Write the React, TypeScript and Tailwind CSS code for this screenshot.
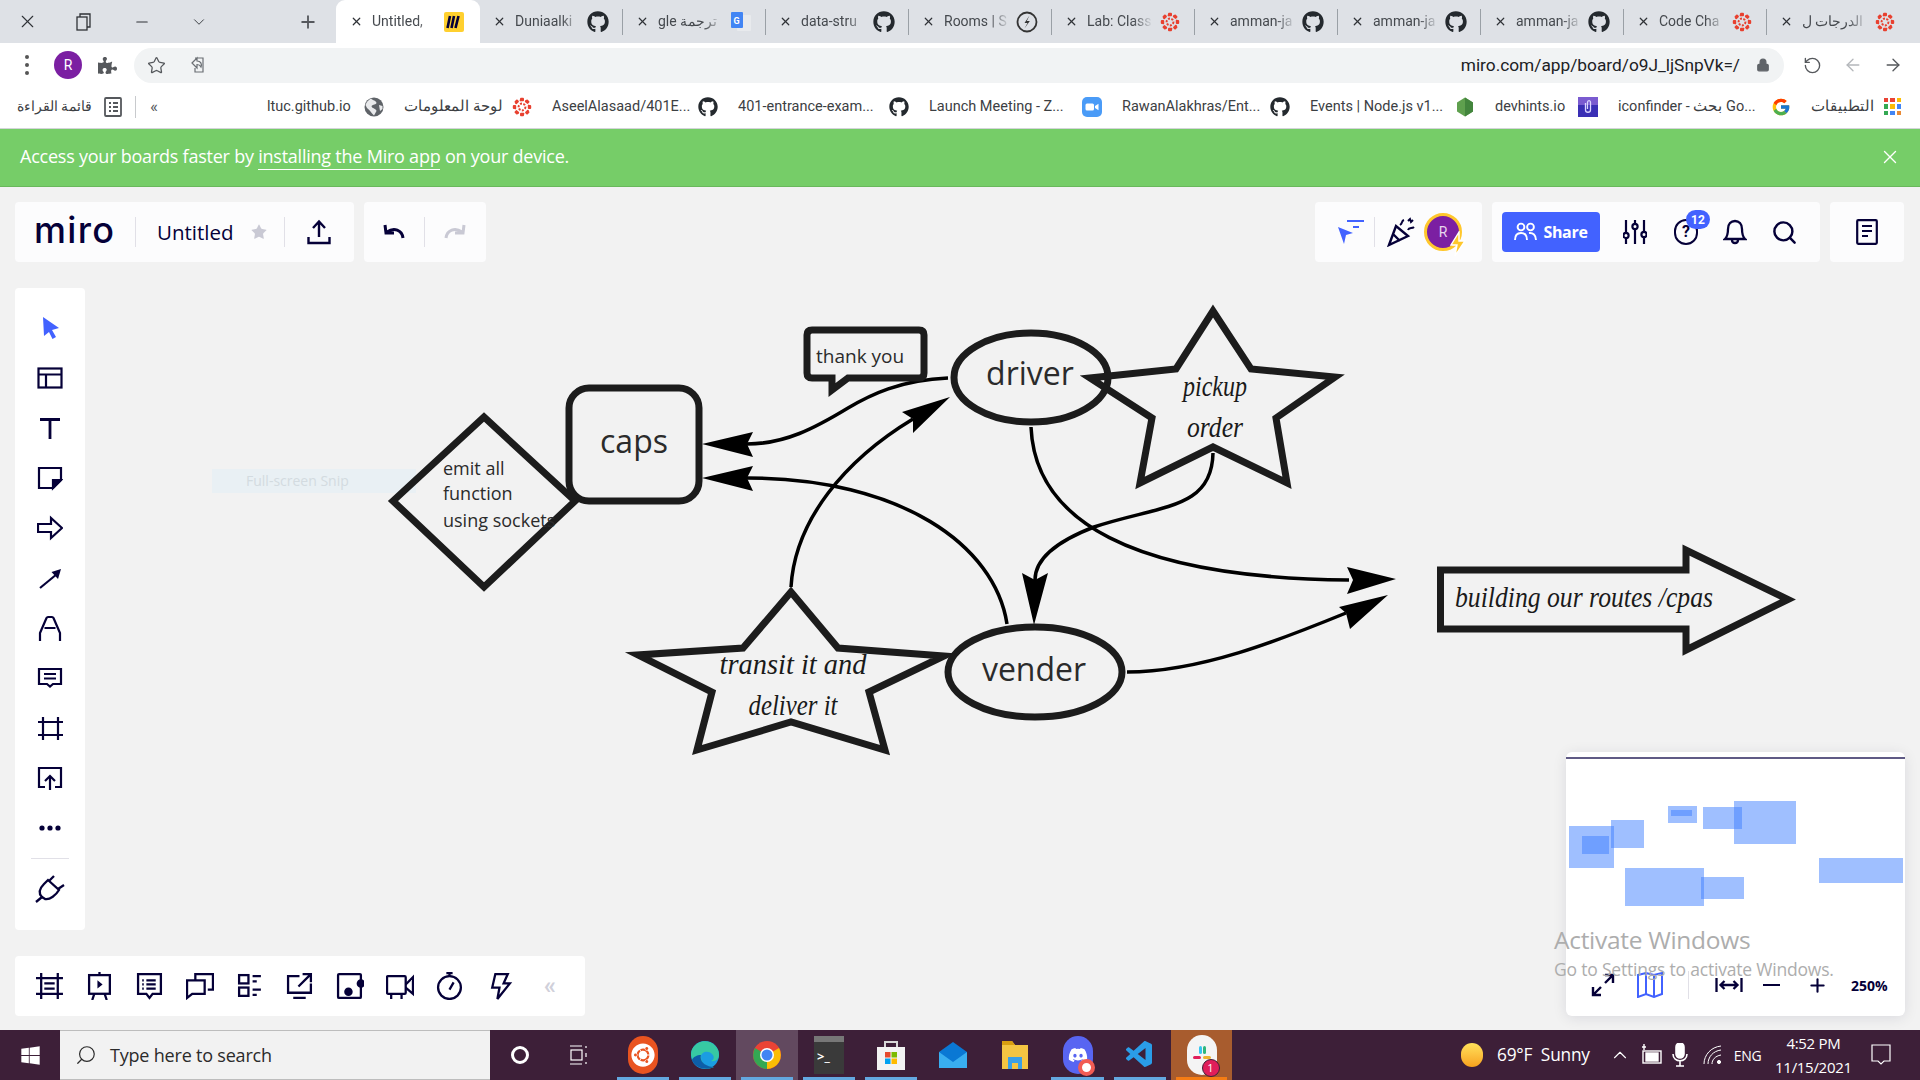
import { ReactNode } from 'react';
import { ArrowLeft, ArrowRight, ChevronDown, ChevronUp, Lock, Minus, Plus, RotateCw, Search, Star, X } from 'lucide-react';
import { FaGithub, FaUbuntu, FaDiscord, FaWindows, FaPuzzlePiece } from 'react-icons/fa';
import { FcGoogle } from 'react-icons/fc';
import { VscVscode } from 'react-icons/vsc';

const INK = '#050038';

function Github({ size = 22 }: { size?: number }) {
  return <FaGithub size={size} className="text-[#24292e] shrink-0" />;
}

function CanvasIcon() {
  const dots = [0, 45, 90, 135, 180, 225, 270, 315];
  return (
    <svg width="20" height="20" viewBox="0 0 20 20" className="shrink-0">
      <circle cx="10" cy="10" r="3.4" fill="none" stroke="#e8402f" strokeWidth="2" strokeDasharray="2 1.4" />
      {dots.map(d => (
        <g key={d} transform={`rotate(${d} 10 10)`}>
          <rect x="8" y="0.8" width="4" height="3.4" rx="1" fill="#e8402f" />
          <circle cx="13.8" cy="4.2" r="1" fill="#e8402f" />
        </g>
      ))}
    </svg>
  );
}

function MiroFav() {
  return (
    <svg width="20" height="20" viewBox="0 0 20 20" className="shrink-0">
      <rect width="20" height="20" rx="2" fill="#ffd02f" />
      <path d="M6 4 L3.5 16 M10 4 L7.5 16 M14.5 4 L11.5 16" stroke="#050038" strokeWidth="2.6" fill="none" />
    </svg>
  );
}

function TranslateFav() {
  return (
    <svg width="20" height="20" viewBox="0 0 20 20" className="shrink-0">
      <rect x="6" y="3" width="14" height="16" rx="1" fill="#e8eaed" />
      <rect x="0" y="0" width="12" height="16" rx="1" fill="#4285f4" />
      <text x="2.5" y="11.5" fontSize="9" fontWeight="700" fill="#fff" fontFamily="Roboto, sans-serif">G</text>
    </svg>
  );
}

function RoomsFav() {
  return (
    <svg width="22" height="22" viewBox="0 0 22 22" className="shrink-0">
      <circle cx="11" cy="11" r="9.5" fill="none" stroke="#333" strokeWidth="1.8" />
      <path d="M13.5 4.5 L8.5 12 H11.5 L8.5 17.5 L13.8 10 H10.8 Z" fill="#333" />
    </svg>
  );
}

function Favicon({ kind }: { kind: string }) {
  if (kind === 'miro') return <MiroFav />;
  if (kind === 'gh') return <Github />;
  if (kind === 'tr') return <TranslateFav />;
  if (kind === 'rooms') return <RoomsFav />;
  return <CanvasIcon />;
}

const tabs = [
  { t: 'Untitled,', f: 'miro', active: true },
  { t: 'Duniaalki', f: 'gh' },
  { t: 'gle ترجمة', f: 'tr' },
  { t: 'data-stru', f: 'gh' },
  { t: 'Rooms | S', f: 'rooms' },
  { t: 'Lab: Class', f: 'canvas' },
  { t: 'amman-ja', f: 'gh' },
  { t: 'amman-ja', f: 'gh' },
  { t: 'amman-ja', f: 'gh' },
  { t: 'Code Cha', f: 'canvas' },
  { t: 'الدرجات ل', f: 'canvas' }
];

function tabClass(active: boolean | undefined, last: boolean) {
  if (active) return 'flex h-[43px] w-[144px] items-center rounded-t-[9px] bg-white pl-[14px] pr-[15px] text-[14px]';
  if (last) return 'flex h-[43px] w-[143px] items-center pl-[13px] pr-[14px] text-[14px]';
  return 'flex h-[43px] w-[143px] items-center pl-[13px] pr-[20px] text-[14px]';
}

function TabStrip() {
  return (
    <div className="flex h-[43px] bg-[#dee1e6] text-[#45494e]">
      <div className="flex w-[336px] items-center text-[#2f3237]">
        <X size={21} strokeWidth={1.3} className="ml-[17px]" />
        <svg width="16" height="18" viewBox="0 0 16 18" className="ml-[38px]" fill="none" stroke="#2f3237" strokeWidth="1.3">
          <rect x="1" y="4" width="10" height="13" />
          <path d="M4 4 V1 H14 V14 H11" />
        </svg>
        <Minus size={18} strokeWidth={1.4} className="ml-[41px]" />
        <ChevronDown size={18} strokeWidth={1.2} className="ml-[39px]" />
        <Plus size={20} strokeWidth={2.2} className="ml-[90px] text-[#55585d]" />
      </div>
      {tabs.map((tab, i) => (
        <div key={i} className={tabClass(tab.active, i === tabs.length - 1)}>
          <X size={13} strokeWidth={2.2} className="mr-[9px] shrink-0 text-[#2f3237]" />
          <span className="min-w-0 flex-1 overflow-hidden whitespace-nowrap [mask-image:linear-gradient(to_right,black_70%,transparent)]">{tab.t}</span>
          <span className="ml-[6px] flex w-[22px] justify-center"><Favicon kind={tab.f} /></span>
          {!tab.active && i < tabs.length - 1 && i > 0 && <span className="ml-[13px] -mr-[20px] h-[26px] w-px bg-[#9aa0a6]" />}
        </div>
      ))}
    </div>
  );
}

function AddressBar() {
  return (
    <div className="flex h-[44px] items-center bg-white text-[#5f6368]">
      <div className="ml-[25px] flex w-[4px] flex-col gap-[4px]">
        <span className="h-[4px] w-[4px] rounded-full bg-[#555]" />
        <span className="h-[4px] w-[4px] rounded-full bg-[#555]" />
        <span className="h-[4px] w-[4px] rounded-full bg-[#555]" />
      </div>
      <span className="ml-[25px] flex h-[28px] w-[28px] items-center justify-center rounded-full bg-[#7b1fa2] text-[14px] text-white">R</span>
      <FaPuzzlePiece size={19} className="ml-[16px] text-[#55585c]" />
      <div className="ml-[17px] flex h-[35px] w-[1650px] items-center rounded-full bg-[#f1f3f4] pl-[13px] pr-[14px]">
        <Star size={19} strokeWidth={1.6} className="text-[#55585c]" />
        <svg width="20" height="20" viewBox="0 0 20 20" className="ml-[22px]" fill="none" stroke="#6a6e73" strokeWidth="1.2">
          <path d="M7 3 H15 V17 H7 V13 M4 8 L9 3 V6 C13 6 14 9 13 12 C12 10 11 9.5 9 9.5 V13 Z" />
        </svg>
        <span className="ml-auto pt-[2px] text-[17.3px] text-[#202124]">miro.com/app/board/o9J_ljSnpVk=/</span>
        <Lock size={14} fill="#5f6368" strokeWidth={2} className="ml-[16px]" />
      </div>
      <RotateCw size={19} strokeWidth={1.7} className="ml-[19px] -scale-x-100 text-[#55585c]" />
      <ArrowLeft size={20} strokeWidth={1.6} className="ml-[21px] text-[#b4b7bb]" />
      <ArrowRight size={20} strokeWidth={1.6} className="ml-[20px] text-[#55585c]" />
    </div>
  );
}

function ZoomFav() {
  return (
    <svg width="20" height="20" viewBox="0 0 20 20" className="shrink-0">
      <rect width="20" height="20" rx="5" fill="#4a9bf7" />
      <rect x="3.5" y="6.5" width="8.5" height="7" rx="1.5" fill="#fff" />
      <path d="M13 9 L16.5 6.8 V13.2 L13 11 Z" fill="#fff" />
    </svg>
  );
}

function NodeFav() {
  return (
    <svg width="20" height="20" viewBox="0 0 20 20" className="shrink-0">
      <path d="M10 0.5 L18 5.5 V14.5 L10 19.5 L2 14.5 V5.5 Z" fill="#5fa04e" />
      <path d="M10 0.5 L18 5.5 V14.5 L10 19.5 Z" fill="#43853d" />
    </svg>
  );
}

function HintsFav() {
  return (
    <svg width="20" height="20" viewBox="0 0 20 20" className="shrink-0">
      <rect width="20" height="20" fill="#3a2fb5" />
      <rect width="20" height="8" fill="#7a5bd0" />
      <path d="M7.5 6 V13 C7.5 16 12.5 16 12.5 13 V5.5 C12.5 3 9.5 3 9.5 5.5 V12" stroke="#dcd6ff" strokeWidth="1.3" fill="none" />
    </svg>
  );
}

function GlobeFav() {
  return (
    <svg width="20" height="20" viewBox="0 0 20 20" className="shrink-0">
      <circle cx="10" cy="10" r="9.5" fill="#5f6368" />
      <path d="M7 1.5 C9 4 12 3 12.5 6 C12 8 9 7 7.5 9 C8 12 12 11 12.5 14 L10 18.5 C7 16 6 13 3 11 L1.5 8 C3 4 5 3 7 1.5 Z M15 8 L18.5 9 V12 L16 14 Z" fill="#e9eaec" />
    </svg>
  );
}

function AppsFav() {
  const c = ['#ea4335', '#ea4335', '#fbbc05', '#34a853', '#fbbc05', '#4285f4', '#34a853', '#4285f4', '#ea8a35'];
  return (
    <div className="grid h-[17px] w-[17px] shrink-0 grid-cols-3 gap-[2px]">
      {c.map((col, i) => <span key={i} style={{ background: col }} />)}
    </div>
  );
}

const bookmarks: { t: string; w: string; icon: ReactNode }[] = [
  { t: 'ltuc.github.io', w: 'w-[85px]', icon: <GlobeFav /> },
  { t: 'لوحة المعلومات', w: 'w-[96px]', icon: <CanvasIcon /> },
  { t: 'AseelAlasaad/401E...', w: 'w-[134px]', icon: <Github size={20} /> },
  { t: '401-entrance-exam...', w: 'w-[139px]', icon: <Github size={20} /> },
  { t: 'Launch Meeting - Z...', w: 'w-[141px]', icon: <ZoomFav /> },
  { t: 'RawanAlakhras/Ent...', w: 'w-[136px]', icon: <Github size={20} /> },
  { t: 'Events | Node.js v1...', w: 'w-[133px]', icon: <NodeFav /> },
  { t: 'devhints.io', w: 'w-[71px]', icon: <HintsFav /> },
  { t: 'iconfinder - بحث Go...', w: 'w-[141px]', icon: <FcGoogle size={20} className="shrink-0" /> },
  { t: 'التطبيقات', w: 'w-[61px]', icon: <AppsFav /> }
];

function Bookmarks() {
  return (
    <div className="flex h-[42px] items-center border-b border-[#d3d5d8] bg-white pb-[2px] text-[14.5px] text-[#3c4043]">
      <span dir="rtl" className="ml-[18px] w-[74px] whitespace-nowrap text-[13.5px]">قائمة القراءة</span>
      <svg width="18" height="20" viewBox="0 0 18 20" className="ml-[12px]" fill="none" stroke="#55585c" strokeWidth="1.8">
        <rect x="1" y="1" width="16" height="18" rx="1" />
        <path d="M5 6 H7 M9 6 H14 M5 10 H7 M9 10 H14 M5 14 H7 M9 14 H14" />
      </svg>
      <span className="ml-[13px] h-[22px] w-px bg-[#c8cacd]" />
      <span className="ml-[14px] w-[10px] text-[17px] leading-none text-[#55585c]">«</span>
      <div className="ml-[107px] flex items-center gap-[20px]">
        {bookmarks.map(b => (
          <div key={b.t} className="flex items-center gap-[12px]">
            <span className={`${b.w} whitespace-nowrap`}>{b.t}</span>
            {b.icon}
          </div>
        ))}
      </div>
    </div>
  );
}

function Banner() {
  return (
    <div className="flex h-[58px] items-center justify-between border-b border-[#69b85c] bg-[#76cd68] pb-[2px] pl-[20px] pr-[19px] text-[18px] text-white [font-family:'Open_Sans',sans-serif] tracking-[-0.23px]">
      <span>Access your boards faster by <span className="border-b border-white pb-[1px]">installing the Miro app</span> on your device.</span>
      <X size={22} strokeWidth={1.5} />
    </div>
  );
}

function Sep({ cls = 'h-[30px]' }: { cls?: string }) {
  return <span className={`block ${cls} w-px bg-[#e1e0e7]`} />;
}

function UploadIco() {
  return (
    <svg width="24" height="26" viewBox="0 0 24 26" fill="none" stroke={INK} strokeWidth="2.4">
      <path d="M12 18 V3 M6 9 L12 2.5 L18 9 M1.5 18 V24 H22.5 V18" />
    </svg>
  );
}

function TopBar() {
  return (
    <div className="flex h-[60px] items-stretch justify-between pl-[15px] pr-[16px]">
      <div className="flex gap-[10px]">
        <div className="flex w-[339px] items-center rounded-[4px] bg-[#fcfcfd] text-[#050038]">
          <span className="ml-[19px] w-[82px] pb-[4px] text-[36px] font-medium leading-none tracking-[1.3px] [font-family:Inter,sans-serif]">miro</span>
          <span className="ml-[19px]"><Sep /></span>
          <span className="ml-[21px] w-[78px] whitespace-nowrap text-[20.5px] font-medium [font-family:'Open_Sans',sans-serif]">Untitled</span>
          <Star size={18} fill="#c9c9d4" strokeWidth={0} className="ml-[15px]" />
          <span className="ml-[16px]"><Sep /></span>
          <span className="ml-[22px]"><UploadIco /></span>
        </div>
        <div className="flex w-[122px] items-center rounded-[4px] bg-[#fcfcfd]">
          <svg width="24" height="20" viewBox="0 0 24 20" className="ml-[18px]" fill="none" stroke={INK} strokeWidth="3">
            <path d="M21 16 C20 8 12 5 5 10 M3 3 L4 11 L12 11" />
          </svg>
          <span className="ml-[18px]"><Sep /></span>
          <svg width="24" height="20" viewBox="0 0 24 20" className="ml-[18px] -scale-x-100" fill="none" stroke="#c9c9d4" strokeWidth="3">
            <path d="M21 16 C20 8 12 5 5 10 M3 3 L4 11 L12 11" />
          </svg>
        </div>
      </div>
      <div className="flex gap-[10px]">
        <div className="flex w-[167px] items-center rounded-[4px] bg-[#fcfcfd]">
          <svg width="28" height="26" viewBox="0 0 28 26" className="ml-[22px]">
            <path d="M1 8 L16 14 L9 16 L7 25 Z" fill="#4262ff" />
            <path d="M10 2 H27 M16 8 H22" stroke="#4262ff" strokeWidth="2.2" />
          </svg>
          <span className="ml-[9px]"><Sep /></span>
          <svg width="30" height="30" viewBox="0 0 30 30" className="ml-[12px]" fill="none" stroke={INK} strokeWidth="2.4">
            <path d="M2 28 L9 9 L21 19 Z M6 17 L13 24" />
            <path d="M13 8 C16 6 14 4 17 3 M21 13 C22 10 25 12 27 10 M21 4 L23 2 L24 5 L26 3" strokeWidth="2" />
          </svg>
          <div className="relative ml-[7px] flex h-[38px] w-[38px] items-center justify-center rounded-full border-[3px] border-[#ffc72c] bg-[#7b1fa2] text-[14px] text-[#e8d5ee]">
            R
            <svg width="16" height="26" viewBox="0 0 16 26" className="absolute -bottom-[9px] -right-[7px]">
              <path d="M9 1 L1 14 H7 L5 25 L15 10 H9 Z" fill="#ffc72c" stroke="#fff" strokeWidth="1.4" />
            </svg>
          </div>
        </div>
        <div className="flex w-[328px] items-center rounded-[4px] bg-[#fcfcfd]">
          <div className="ml-[10px] flex h-[40px] w-[98px] items-center justify-center gap-[6px] rounded-[4px] bg-[#4262ff] text-[16px] font-bold text-white [font-family:'Open_Sans',sans-serif] tracking-[-0.3px]">
            <svg width="23" height="20" viewBox="0 0 23 20" fill="none" stroke="#fff" strokeWidth="1.9">
              <circle cx="7" cy="5" r="3.4" /><circle cx="16.5" cy="5" r="3.4" />
              <path d="M1 18 C1 13 3 11 7 11 C11 11 13 13 13 18 M15 11 C19 10.5 22 13 22 18" />
            </svg>
            Share
          </div>
          <svg width="24" height="26" viewBox="0 0 24 26" className="ml-[23px]" fill="none" stroke={INK} strokeWidth="2.2">
            <path d="M3 1 V13 M3 20 V25 M12 1 V4 M12 11 V25 M21 1 V12 M21 19 V25" />
            <circle cx="3" cy="16.5" r="2.6" /><circle cx="12" cy="7.5" r="2.6" /><circle cx="21" cy="15.5" r="2.6" />
          </svg>
          <div className="relative ml-[26px] flex h-[28px] w-[26px] items-center justify-center">
            <span className="flex h-[26px] w-[24px] items-center justify-center rounded-full border-[2.4px] border-[#050038] text-[16px] font-bold text-[#050038]">?</span>
            <span className="absolute -right-[11px] -top-[8px] flex h-[19px] w-[24px] items-center justify-center rounded-full bg-[#4262ff] text-[12px] font-bold text-white">12</span>
          </div>
          <svg width="24" height="26" viewBox="0 0 24 26" className="ml-[24px]" fill="none" stroke={INK} strokeWidth="2.3">
            <path d="M2 20 C5 17 5 13 5 10 C5 5 8 2 12 2 C16 2 19 5 19 10 C19 13 19 17 22 20 Z M9 21 C9 25 15 25 15 21" />
          </svg>
          <Search size={27} color={INK} strokeWidth={2.2} className="ml-[24px]" />
        </div>
        <div className="flex w-[74px] items-center justify-center rounded-[4px] bg-[#fcfcfd]">
          <svg width="22" height="26" viewBox="0 0 22 26" fill="none" stroke={INK} strokeWidth="2.2">
            <rect x="1.2" y="1.2" width="19.6" height="23.6" rx="1" />
            <path d="M6 7 H16 M6 12 H16 M6 17 H12" />
          </svg>
        </div>
      </div>
    </div>
  );
}

const stroke = { fill: 'none', stroke: INK, strokeWidth: 2.2 };

const leftTools: ReactNode[] = [
  <path d="M6 2 L22 13 L15 15 L19 22 L15.5 24 L12 17 L7 21 Z" fill="#4262ff" />,
  <g {...stroke}><rect x="1.5" y="3.5" width="23" height="19" /><path d="M1.5 9.5 H24.5 M9 9.5 V22.5" /></g>,
  <g {...stroke} strokeWidth="2.8"><path d="M3 4.5 H23 M13 4.5 V24" /></g>,
  <g {...stroke}><path d="M2 3 H24 V15 L16 23 H2 Z" /><path d="M16 23 V15 H24 Z" fill={INK} /></g>,
  <g {...stroke}><path d="M1 9 H14 V3 L25 13 L14 23 V17 H1 Z" /></g>,
  <g><path d="M3 23 L20 9" stroke={INK} strokeWidth="2.2" /><path d="M24 4 L21 14 L14.5 7 Z" fill={INK} /></g>,
  <g {...stroke}><path d="M3 26 V18 L9.5 3 Q10 2 11 2 H15 Q16 2 16.5 3 L23 18 V26 M7.5 13 H18.5" /></g>,
  <g {...stroke}><path d="M2 4 H24 V19 H16 L13 21.5 L10 19 H2 Z" /><path d="M7 9 H19 M7 13.5 H19" /></g>,
  <g {...stroke}><path d="M1 7 H26 M1 20 H26 M6 2 V25 M21 2 V25" /></g>,
  <g {...stroke}><path d="M8 22 H2 V3 H24 V22 H18 M13 25 V12 M8 16 L13 11 L18 16" /></g>,
  <g fill={INK}><circle cx="5" cy="13" r="2.6" /><circle cx="13" cy="13" r="2.6" /><circle cx="21" cy="13" r="2.6" /></g>
];

function LeftToolbar() {
  return (
    <div className="mt-[26px] ml-[15px] flex h-[642px] w-[70px] flex-col items-center rounded-[4px] bg-white pt-[15px]">
      {leftTools.map((t, i) => (
        <div key={i} className="flex h-[50px] w-full items-center justify-center">
          <svg width="26" height="26" viewBox="0 0 26 26">{t}</svg>
        </div>
      ))}
      <span className="mt-[5px] h-px w-[38px] bg-[#e1e0e7]" />
      <div className="mt-[5px] flex h-[50px] items-center justify-center">
        <svg width="32" height="30" viewBox="0 0 32 30" fill="none" stroke={INK} strokeWidth="2.3">
          <path d="M2 28 L8 23 M8 23 C4 19 6 14 10 10 L14 6 L25 16 C22 21 16 26 11 25 Z M15 7 L20 2 M24 15 L30 11" />
        </svg>
      </div>
    </div>
  );
}

const bottomTools: ReactNode[] = [
  <g {...stroke}><path d="M0 6 H26 M0 21 H26 M5 1 V26 M21 1 V26 M8 11 H18 M8 16 H18" /></g>,
  <g {...stroke}><rect x="3" y="3" width="20" height="18" /><path d="M13 0 V3 M8 21 L6 27 M18 21 L20 27" /><path d="M11 8 L16 12 L11 16 Z" fill={INK} strokeWidth="0" /></g>,
  <g {...stroke}><path d="M2 2 H24 V21 H16 L13 25 L10 21 H2 Z" /><path d="M10 8 H19 M10 12 H19 M10 16 H19 M6 8 H7.5 M6 12 H7.5 M6 16 H7.5" /></g>,
  <g {...stroke}><path d="M9 7 V2 H26 V17 L21 17 M1 8 H18 V21 H6 L1 25 Z" /></g>,
  <g {...stroke}><rect x="3" y="3" width="9" height="8" /><rect x="3" y="15" width="9" height="8" /><path d="M16 4 H24 M16 9 H20 M16 17 H24 M16 22 H20" /></g>,
  <g {...stroke}><path d="M13 4 H2 V20 H24 V11 M7 25 H19 M12 14 L23 3 M16 2 H24 V10" /></g>,
  <g {...stroke}><rect x="2" y="2" width="22" height="23" rx="1" /><circle cx="24" cy="11" r="3" fill={INK} /><circle cx="12" cy="19" r="3" fill={INK} /></g>,
  <g {...stroke}><rect x="1" y="4" width="18" height="17" rx="1" /><path d="M19 12 L26 5 V21 L19 15 M5 21 V26 M15 21 V26" /></g>,
  <g {...stroke}><circle cx="13" cy="15" r="11" /><path d="M13 0.5 V4 M10 1 H16 M17 10 L13 17" /></g>,
  <g {...stroke}><path d="M9 2 H21 L17 11 H23 L11 26 L13 15 H6 Z" /></g>
];

function BottomToolbar() {
  return (
    <div className="mt-[26px] ml-[15px] flex h-[60px] w-[570px] items-center rounded-[4px] bg-white pl-[10px]">
      {bottomTools.map((t, i) => (
        <div key={i} className="flex w-[50px] items-center justify-center">
          <svg width="28" height="28" viewBox="0 0 27 27">{t}</svg>
        </div>
      ))}
      <div className="flex w-[50px] items-center justify-center text-[24px] font-bold leading-none text-[#d0d0da]">«</div>
    </div>
  );
}

function Diagram() {
  const line = { fill: 'none', stroke: '#000', strokeWidth: 3.5 };
  const shape = { fill: 'none', stroke: '#1c1c1c', strokeWidth: 7 };
  const hand = { fontFamily: "'Liberation Serif', serif", fontStyle: 'italic', fill: '#1a1a1a', textAnchor: 'middle' as const, lengthAdjust: 'spacingAndGlyphs' as const };
  const open = { fontFamily: "'Open Sans', sans-serif", fill: '#2b2b2b' };
  return (
    <svg className="absolute left-0 top-0" width="1920" height="843" viewBox="0 187 1920 843">
      <rect x="212" y="469" width="204" height="24" fill="#e9f0f4" />
      <text x="246" y="486" fontSize="14" fill="#d3dbe0" {...{ fontFamily: "'Open Sans', sans-serif" }}>Full-screen Snip</text>

      <path d="M948 378 C900 380 870 395 848 408 C815 428 785 444 747 444" {...line} />
      <polygon points="702,444 753,432 747,444 753,457" />
      <path d="M1007 624 C995 545 900 478 747 478" {...line} />
      <polygon points="702,478 753,466 747,478 753,491" />
      <path d="M791 587 C795 520 845 460 913 419" {...line} />
      <polygon points="950,397 902,412 913,419 913,433" />
      <path d="M1031 427 C1035 520 1130 578 1349 580" {...line} />
      <polygon points="1396,579 1347,567 1353,580 1347,594" />
      <path d="M1213 453 C1212 510 1160 505 1094 527 C1055 542 1035 560 1035 580" {...line} />
      <polygon points="1034,625 1022,573 1035,580 1048,573" />
      <path d="M1127 672 C1200 672 1280 640 1346 613" {...line} />
      <polygon points="1388,595 1339,607 1346,613 1350,629" />

      <polygon points="393,501 484,417 575,501 484,587" {...shape} />
      <rect x="569" y="388" width="130" height="113" rx="20" {...shape} />
      <path d="M848 378 L832 390 V378 H812 Q807 378 807 373 V335 Q807 330 812 330 H919 Q924 330 924 335 V373 Q924 378 919 378 Z" {...shape} />
      <ellipse cx="1031" cy="377.5" rx="77" ry="44.5" {...shape} />
      <ellipse cx="1035" cy="672" rx="87" ry="45" {...shape} />
      <polygon points="791,592 838,648 944,656 869,692 885,750 791,722 697,750 712,692 638,655 743,648" {...shape} />
      <polygon points="1213,311 1251,369 1335,377 1276,418 1287,483 1213,447 1140,483 1152,418 1090,378 1176,369" {...shape} />
      <polygon points="1440.5,570 1686,570 1686,550 1788,599.5 1686,650 1686,629 1440.5,629" {...shape} />

      <text x="634" y="453" fontSize="32" textAnchor="middle" {...open}>caps</text>
      <text x="1030" y="385" fontSize="32" textAnchor="middle" {...open}>driver</text>
      <text x="1034" y="681" fontSize="32" textAnchor="middle" {...open}>vender</text>
      <text x="816" y="363" fontSize="19" {...open}>thank you</text>
      <text x="443" y="475" fontSize="18" {...open}>emit all</text>
      <text x="443" y="500" fontSize="18" {...open}>function</text>
      <text x="443" y="527" fontSize="18" {...open}>using sockets</text>

      <text x="793" y="674" fontSize="29" textLength="147" {...hand}>transit it and</text>
      <text x="793" y="715" fontSize="29" textLength="89" {...hand}>deliver it</text>
      <text x="1215" y="396" fontSize="29" textLength="64" {...hand}>pickup</text>
      <text x="1215" y="437" fontSize="29" textLength="56" {...hand}>order</text>
      <text x="1584" y="607" fontSize="30" textLength="258" {...hand}>building our routes /cpas</text>
    </svg>
  );
}

const miniRects = [
  'left-[3px] top-[74px] h-[42px] w-[45px]',
  'left-[45px] top-[68px] h-[28px] w-[33px]',
  'left-[16px] top-[84px] h-[18px] w-[27px]',
  'left-[102px] top-[54px] h-[17px] w-[29px]',
  'left-[105px] top-[58px] h-[6px] w-[21px]',
  'left-[137px] top-[55px] h-[22px] w-[39px]',
  'left-[168px] top-[49px] h-[43px] w-[62px]',
  'left-[59px] top-[116px] h-[38px] w-[79px]',
  'left-[135px] top-[125px] h-[22px] w-[43px]',
  'left-[253px] top-[106px] h-[25px] w-[84px]'
];

function MiniMap() {
  return (
    <div className="absolute left-[1566px] top-[565px] h-[264px] w-[339px] rounded-[6px] bg-white shadow-[0_2px_14px_rgba(5,0,56,0.1)]">
      <div className="absolute left-0 right-0 top-[5px] h-[2px] bg-[#5f5a85]" />
      {miniRects.map(r => <div key={r} className={`absolute ${r} bg-[#3f80ff]/50`} />)}
      <div className="absolute bottom-[17px] left-0 right-0 flex h-[28px] items-center">
        <svg width="24" height="24" viewBox="0 0 24 24" className="ml-[25px]" fill="none" stroke={INK} strokeWidth="2.4">
          <path d="M2 22 L10 14 M2 14 V22 H10 M22 2 L14 10 M14 2 H22 V10" />
        </svg>
        <svg width="26" height="26" viewBox="0 0 26 26" className="ml-[22px]" fill="none" stroke="#4262ff" strokeWidth="2">
          <path d="M1 3 L9 1 L17 3 L25 1 V22 L17 25 L9 22 L1 25 Z M9 1 V22 M17 3 V25" />
        </svg>
        <span className="ml-[25px] h-[28px] w-px bg-[#e1e0e7]" />
        <svg width="28" height="16" viewBox="0 0 28 16" className="ml-[26px]" fill="none" stroke={INK} strokeWidth="2.3">
          <path d="M1.5 1 V15 M26.5 1 V15 M6 8 H22 M9.5 4 L5.5 8 L9.5 12 M18.5 4 L22.5 8 L18.5 12" />
        </svg>
        <span className="ml-[20px] h-[2.5px] w-[17px] bg-[#050038]" />
        <Plus size={21} color={INK} strokeWidth={2.4} className="ml-[27px]" />
        <span className="ml-[23px] text-[14px] font-bold text-[#050038] [font-family:'Open_Sans',sans-serif]">250%</span>
      </div>
    </div>
  );
}

function Canvas() {
  return (
    <div className="relative h-[843px] overflow-hidden bg-[#f2f2f2] pt-[15px]">
      <Diagram />
      <div className="relative">
        <TopBar />
        <LeftToolbar />
        <BottomToolbar />
      </div>
      <MiniMap />
      <div className="pointer-events-none absolute left-[1554px] top-[735px] text-[#adadad] [font-family:'Open_Sans',sans-serif]">
        <div className="text-[24.5px] leading-[36px] tracking-[-0.3px]">Activate Windows</div>
        <div className="text-[17.5px] leading-[22px] tracking-[-0.2px]">Go to Settings to activate Windows.</div>
      </div>
    </div>
  );
}

function ChromeIco() {
  return (
    <svg width="30" height="30" viewBox="0 0 30 30">
      <circle cx="15" cy="15" r="14" fill="#ea4335" />
      <path d="M15 15 L3 8 A14 14 0 0 0 15 29 Z" fill="#34a853" />
      <path d="M15 15 L27 8 A14 14 0 0 1 15 29 Z" fill="#fbbc05" />
      <circle cx="15" cy="15" r="7" fill="#fff" />
      <circle cx="15" cy="15" r="5.5" fill="#4285f4" />
    </svg>
  );
}

function EdgeIco() {
  return (
    <svg width="30" height="30" viewBox="0 0 30 30">
      <circle cx="15" cy="15" r="14" fill="#1b9de2" />
      <path d="M1 15 C3 25 14 32 24 27 C20 27 11 26 11 17 C11 12 18 10 22 14 C26 18 22 21 21 21 C25 22 29 19 29 15 C29 5 18 -2 8 3 C3 6 1 10 1 15 Z" fill="#37c9a3" />
      <path d="M2 20 C5 28 16 31 24 27 C16 27 9 22 11 15 C7 15 3 17 2 20 Z" fill="#0d5ea8" />
    </svg>
  );
}

function StoreIco() {
  return (
    <svg width="30" height="32" viewBox="0 0 30 32">
      <path d="M9 8 V3 H21 V8" fill="none" stroke="#d8d8d8" strokeWidth="2" />
      <rect x="1" y="8" width="28" height="23" fill="#f3f3f3" />
      <rect x="9" y="13" width="5.5" height="5.5" fill="#e64a2e" />
      <rect x="15.5" y="13" width="5.5" height="5.5" fill="#7cbb00" />
      <rect x="9" y="19.5" width="5.5" height="5.5" fill="#00a1f1" />
      <rect x="15.5" y="19.5" width="5.5" height="5.5" fill="#ffbb00" />
    </svg>
  );
}

function MailIco() {
  return (
    <svg width="30" height="28" viewBox="0 0 30 28">
      <path d="M1 11 L15 1 L29 11 V27 H1 Z" fill="#0a78d4" />
      <path d="M1 11 L15 21 L29 11 V27 H1 Z" fill="#39aef0" />
    </svg>
  );
}

function FolderIco() {
  return (
    <svg width="28" height="30" viewBox="0 0 28 30">
      <path d="M1 1 H11 L14 5 H27 V29 H1 Z" fill="#f4c542" />
      <path d="M1 1 H11 L14 5 H1 Z" fill="#d99e10" />
      <path d="M7 17 H21 V29 H17 V23 H11 V29 H7 Z" fill="#3aa0e6" />
    </svg>
  );
}

function SlackIco() {
  return (
    <div className="relative flex h-[40px] w-[30px] items-center justify-center rounded-full bg-[#f4f4f4]">
      <svg width="20" height="20" viewBox="0 0 20 20">
        <rect x="7" y="1" width="3" height="8" rx="1.5" fill="#36c5f0" />
        <rect x="11" y="1" width="3" height="8" rx="1.5" fill="#2eb67d" />
        <rect x="1" y="11" width="8" height="3" rx="1.5" fill="#e01e5a" />
        <rect x="11" y="11" width="8" height="3" rx="1.5" fill="#ecb22e" />
      </svg>
      <span className="absolute -bottom-[2px] -right-[3px] flex h-[18px] w-[18px] items-center justify-center rounded-full border border-[#3f1f38] bg-[#e01e5a] text-[11px] text-white">1</span>
    </div>
  );
}

function Taskbar() {
  const apps: { w: string; on: string; el: ReactNode; bar?: string }[] = [
    { w: 'w-[62px]', on: '', bar: 'bg-[#63a8e0]', el: <span className="flex h-[38px] w-[30px] items-center justify-center rounded-full bg-[#e95420]"><FaUbuntu size={24} className="text-white" /></span> },
    { w: 'w-[62px]', on: '', bar: 'bg-[#63a8e0]', el: <EdgeIco /> },
    { w: 'w-[62px]', on: 'bg-[#62495f]', bar: 'bg-[#63a8e0]', el: <ChromeIco /> },
    { w: 'w-[62px]', on: '', bar: 'bg-[#63a8e0]', el: <span className="flex h-[38px] w-[30px] flex-col bg-[#3a3a3a] text-[13px] leading-none text-white"><span className="h-[6px] bg-[#777]" /><span className="mt-[8px] pl-[3px] font-bold">&gt;_</span></span> },
    { w: 'w-[62px]', on: '', bar: 'bg-[#63a8e0]', el: <StoreIco /> },
    { w: 'w-[62px]', on: '', el: <MailIco /> },
    { w: 'w-[62px]', on: '', el: <FolderIco /> },
    { w: 'w-[63px]', on: '', bar: 'bg-[#63a8e0]', el: <span className="relative flex h-[38px] w-[30px] items-center justify-center rounded-full bg-[#5865f2]"><FaDiscord size={20} className="text-white" /><span className="absolute -bottom-[2px] -right-[2px] h-[17px] w-[17px] rounded-full border-[4px] border-[#f25c54] bg-white" /></span> },
    { w: 'w-[62px]', on: '', bar: 'bg-[#63a8e0]', el: <VscVscode size={32} className="text-[#2a9de8]" /> },
    { w: 'w-[61px]', on: 'bg-[#a85c2e]', bar: 'bg-[#f57c14]', el: <SlackIco /> }
  ];
  return (
    <div className="flex h-[50px] items-center bg-[#3d1f38] text-white [font-family:'Open_Sans',sans-serif]">
      <div className="flex h-full w-[60px] items-center justify-center"><FaWindows size={21} /></div>
      <div className="flex h-full w-[430px] items-center border-y border-[#bdbdbd] bg-[#f2f2f2] pl-[15px] text-[18px] text-[#2b2b2b] tracking-[-0.2px]">
        <Search size={22} strokeWidth={1.3} className="-scale-x-100" />
        <span className="ml-[13px]">Type here to search</span>
      </div>
      <span className="ml-[21px] h-[18px] w-[18px] rounded-full border-[3px] border-white" />
      <svg width="20" height="20" viewBox="0 0 20 20" className="ml-[41px]" fill="none" stroke="#fff" strokeWidth="1.2">
        <path d="M0 1 H12 M0 19 H12 M16 1 V3 M16 8 V12 M16 17 V19" /><rect x="1" y="5" width="11" height="10" />
      </svg>
      <div className="ml-[22px] flex h-full">
        {apps.map((a, i) => (
          <div key={i} className={`relative flex h-full ${a.w} items-center justify-center ${a.on}`}>
            {a.el}
            {a.bar && <span className={`absolute bottom-0 left-[5px] right-[5px] h-[3px] ${a.bar}`} />}
          </div>
        ))}
      </div>
      <span className="ml-[229px] h-[24px] w-[22px] rounded-full bg-gradient-to-b from-[#ffe15a] to-[#f7a21b]" />
      <span className="ml-[14px] whitespace-pre text-[17.3px] tracking-[-0.2px]">69°F  Sunny</span>
      <ChevronUp size={22} strokeWidth={1.2} className="ml-[19px]" />
      <svg width="22" height="22" viewBox="0 0 22 22" className="ml-[10px]" fill="none" stroke="#fff" strokeWidth="1.4">
        <path d="M3 0 V6 M1 3 H5" /><rect x="2" y="7" width="18" height="12" /><rect x="5" y="9" width="12" height="8" fill="#fff" />
      </svg>
      <svg width="16" height="24" viewBox="0 0 16 24" className="ml-[9px]" fill="none" stroke="#fff" strokeWidth="1.6">
        <rect x="4" y="0" width="8" height="15" rx="4" fill="#fff" /><path d="M1 11 C1 20 15 20 15 11 M8 18 V23 M4 23 H12" />
      </svg>
      <svg width="20" height="20" viewBox="0 0 20 20" className="ml-[15px]" fill="none" stroke="#fff" strokeWidth="1">
        <path d="M1 19 C1 10 8 2 18 1 M5 19 C5 12 10 6 18 5 M9 19 C9 15 12 11 18 10" /><circle cx="16" cy="17" r="1.6" fill="#fff" />
      </svg>
      <span className="ml-[11px] text-[14px] tracking-[-0.3px]">ENG</span>
      <div className="ml-[5px] w-[94px] text-center text-[15px] leading-[24px] tracking-[-0.3px]">
        <div>4:52 PM</div>
        <div>11/15/2021</div>
      </div>
      <svg width="20" height="22" viewBox="0 0 20 22" className="ml-[11px]" fill="none" stroke="#fff" strokeWidth="1.2">
        <path d="M1 1 H19 V17 H13 L10 20 L7 17 H1 Z" />
      </svg>
    </div>
  );
}

export default function App() {
  return (
    <div className="h-[1080px] w-[1920px] overflow-hidden bg-[#f2f2f2] [font-family:Roboto,'Noto_Sans',sans-serif]">
      <TabStrip />
      <AddressBar />
      <Bookmarks />
      <Banner />
      <Canvas />
      <Taskbar />
    </div>
  );
}
